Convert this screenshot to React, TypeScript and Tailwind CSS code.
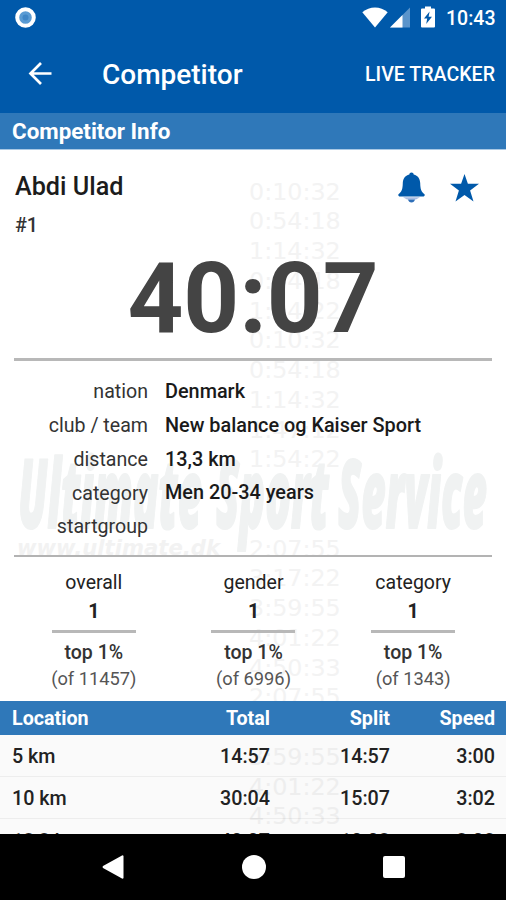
import React from 'react';

interface Detail {
  label: string;
  value: string;
}

interface Ranking {
  label: string;
  rank: number;
  top: string;
  total: number;
}

interface Split {
  location: string;
  total: string;
  split: string;
  speed: string;
}

const details: Detail[] = [
  { label: 'nation', value: 'Denmark' },
  { label: 'club / team', value: 'New balance og Kaiser Sport' },
  { label: 'distance', value: '13,3 km' },
  { label: 'category', value: 'Men 20-34 years' },
  { label: 'startgroup', value: '' }
];

const rankings: Ranking[] = [
  { label: 'overall', rank: 1, top: 'top 1%', total: 11457 },
  { label: 'gender', rank: 1, top: 'top 1%', total: 6996 },
  { label: 'category', rank: 1, top: 'top 1%', total: 1343 }
];

const splits: Split[] = [
  { location: '5 km', total: '14:57', split: '14:57', speed: '3:00' },
  { location: '10 km', total: '30:04', split: '15:07', speed: '3:02' },
  { location: '13,3 km', total: '40:07', split: '10:03', speed: '3:02' }
];

const watermarkTimes = [
  '0:10:32', '0:54:18', '1:14:32', '0:54:18', '1:54:22', '0:10:32', '0:54:18',
  '1:14:32', '1:47:12', '1:54:22', '', '', '2:07:55', '3:17:22',
  '3:59:55', '4:01:22', '4:50:33', '2:07:55', '', '3:59:55', '4:01:22', '4:50:33'
];

const StatusBar: React.FC = () => (
  <div className="flex h-[34px] items-center pl-[15px] pr-[11px] text-white">
    <svg className="h-[21px] w-[21px]" viewBox="0 0 21 21">
      <circle cx="10.5" cy="10.5" r="8.3" fill="#5a9bd3" stroke="#fff" strokeWidth="4" />
      <circle cx="10.5" cy="10.5" r="3" fill="#3f86c6" />
    </svg>
    <svg className="ml-auto h-[21px] w-[26px]" viewBox="0 0 26 21">
      <path d="M0.3 5.2C7.5-1.2 18.5-1.2 25.7 5.2L13 20.5Z" fill="#fff" />
    </svg>
    <svg className="ml-[2px] h-[21px] w-[20px]" viewBox="0 0 20 21">
      <path d="M20 0.5V20.5H0Z" fill="#5a94cb" />
      <path d="M12.5 8V20.5H0Z" fill="#fff" />
    </svg>
    <svg className="ml-[11px] h-[22px] w-[14px]" viewBox="0 0 14 22">
      <path d="M4 0.5h6v2h3q1 0 1 1v17q0 1-1 1H1q-1 0-1-1v-17q0-1 1-1h3Z" fill="#fff" />
      <path d="M8.6 5.5L3 12.6h3.2L5.2 18 11 10.8H7.6Z" fill="#0059aa" />
    </svg>
    <span className="ml-[11px] mt-[3px] w-[49px] text-[19.5px] font-medium">10:43</span>
  </div>
);

const Toolbar: React.FC = () => (
  <div className="flex h-[79px] items-center pl-[28px] pr-[11px] text-white">
    <button aria-label="Back">
      <svg className="h-[23px] w-[24px]" viewBox="0 0 24 23" fill="none" stroke="#fff" strokeWidth="2.7">
        <path d="M23.5 11.5H2.5M13 1L2.5 11.5 13 22" />
      </svg>
    </button>
    <h1 className="ml-[50px] mt-[2px] text-[28px] font-medium">Competitor</h1>
    <button className="ml-auto mt-[2px] text-[19.6px] font-medium">LIVE TRACKER</button>
  </div>
);

const Watermark: React.FC = () => (
  <div className="pointer-events-none absolute inset-0 overflow-hidden" aria-hidden="true">
    <div className="ml-[249px] pt-[27.5px] font-['DejaVu_Sans'] text-[23.8px] leading-[29.75px] text-[#f3f3f3]">
      {watermarkTimes.map((time, i) => (
        <div key={i} className="h-[29.75px]">{time}</div>
      ))}
    </div>
    <svg className="absolute left-0 top-[290px] h-[120px] w-full" viewBox="0 0 506 120">
      <g fontFamily="Open Sans" fontWeight="800" fontStyle="italic" fontSize="95" fill="#f0f2f2" stroke="#f0f2f2" strokeWidth="2" strokeLinejoin="round">
        <text x="18" y="88" textLength="184" lengthAdjust="spacingAndGlyphs">Ultimate</text>
        <text x="216" y="88" textLength="113" lengthAdjust="spacingAndGlyphs">Sport</text>
        <text x="338" y="88" textLength="149" lengthAdjust="spacingAndGlyphs">Service</text>
      </g>
      <text x="17" y="115" fontFamily="DejaVu Sans" fontWeight="700" fontStyle="italic" fontSize="21" fill="#f2f2f2" textLength="203" lengthAdjust="spacingAndGlyphs">
        www.ultimate.dk
      </text>
    </svg>
  </div>
);

const CompetitorSummary: React.FC = () => (
  <section className="relative mx-[14px] h-[211px] border-b-[3px] border-[#b8b8b8] pt-[20px]">
    <div className="flex items-start">
      <h2 className="ml-px text-[25.2px] font-medium leading-[34px] text-[#1c1c1c]">Abdi Ulad</h2>
      <button className="ml-auto mt-[2px]" aria-label="Notifications">
        <svg className="h-[31px] w-[27px]" viewBox="0 0 27 31">
          <path d="M11.3 2.6a2.2 2.2 0 0 1 4.4 0C20 3.7 22 7 22.2 11c.2 6.5 1 8.5 4.3 11.2q.8 1.5-.8 2.3H1.3q-1.6-.8-.8-2.3C3.8 19.5 4.6 17.5 4.8 11 5 7 7 3.7 11.3 2.6Z" fill="#0059aa" />
          <path d="M5 25.3h17l-4 2.2H9Z" fill="#a9bde3" />
          <path d="M10 27.5h7q-.8 3-3.5 3T10 27.5Z" fill="#2f6fb8" />
        </svg>
      </button>
      <button className="ml-[25px] mr-[13px] mt-[4px]" aria-label="Favorite">
        <svg className="h-[28px] w-[29px]" viewBox="0 0 29 28">
          <path d="M14.5 0L17.9 9.8H29L20.1 16.5 23.5 27.5 14.5 21 5.5 27.5 8.9 16.5 0 9.8H11.1Z" fill="#0059aa" />
        </svg>
      </button>
    </div>
    <p className="ml-px mt-[10px] text-[19.7px] font-medium leading-[24px] text-[#333]">#1</p>
    <p className="mt-[13px] text-center text-[97.5px] font-bold leading-[96px] text-[#444]">40:07</p>
  </section>
);

const DetailList: React.FC = () => (
  <section className="relative mx-[14px] h-[196px] border-b-2 border-[#b3b3b3] pt-[14px]">
    {details.map(({ label, value }) => (
      <div key={label} className="flex h-[33.8px] items-center text-[19.6px]">
        <span className="w-[134px] text-right text-[#333]">{label}</span>
        <span className="ml-[17px] text-[19.85px] font-medium text-[#1a1a1a]">{value}</span>
      </div>
    ))}
  </section>
);

const Rankings: React.FC = () => (
  <section className="relative ml-[14px] mr-[13px] grid h-[144px] grid-cols-3 pt-[12px] text-center text-[19.5px] leading-[27px] text-[#222]">
    {rankings.map(({ label, rank, top, total }) => (
      <div key={label} className="flex flex-col items-center">
        <span>{label}</span>
        <span className="mt-[2px] font-bold">{rank}</span>
        <span className="mt-[5px] h-[3px] w-[84px] bg-[#b8b8b8]" />
        <span className="mt-[6px] font-medium text-[#333]">{top}</span>
        <span className="-mt-px text-[18.3px] text-[#555]">(of {total})</span>
      </div>
    ))}
  </section>
);

const SplitTable: React.FC = () => (
  <section className="relative">
    <div className="grid h-[34px] grid-cols-[158px_100px_120px_105px] items-center bg-[#2f78b9] pl-[12px] pr-[11px] pt-px text-right text-[19.7px] font-bold text-white">
      <span className="text-left">Location</span>
      <span>Total</span>
      <span>Split</span>
      <span>Speed</span>
    </div>
    {splits.map(({ location, total, split, speed }) => (
      <div key={location} className="grid h-[42px] grid-cols-[158px_100px_120px_105px] items-center border-b border-black/5 bg-black/2 pl-[12px] pr-[11px] pt-[2px] text-right text-[19.7px] font-medium text-[#222] last:h-[44px]">
        <span className="text-left">{location}</span>
        <span>{total}</span>
        <span>{split}</span>
        <span>{speed}</span>
      </div>
    ))}
  </section>
);

const NavigationBar: React.FC = () => (
  <nav className="flex h-[66px] shrink-0 items-center bg-black pl-[102px]">
    <svg className="h-[24px] w-[22px]" viewBox="0 0 22 24">
      <path d="M21.5 1V23Q21 24 20 23.5L1 13Q0 12 1 11L20 .5Q21 0 21.5 1Z" fill="#fff" />
    </svg>
    <span className="ml-[118px] h-[24px] w-[24px] rounded-full bg-white" />
    <span className="ml-[117px] h-[22px] w-[22px] rounded-[2px] bg-white" />
  </nav>
);

const App: React.FC = () => {
  return (
    <div className="flex h-[900px] w-[506px] flex-col overflow-hidden bg-white font-[Roboto,sans-serif]">
      <header className="shrink-0 bg-[#0059aa]">
        <StatusBar />
        <Toolbar />
      </header>
      <div className="flex h-[37px] shrink-0 items-center border-b border-[#a9c8e4] bg-[#2f78b9] pl-[12px] pt-px text-[22.4px] font-bold text-white">
        Competitor Info
      </div>

      <main className="relative min-h-0 flex-1 overflow-hidden">
        <Watermark />
        <CompetitorSummary />
        <DetailList />
        <Rankings />
        <SplitTable />
      </main>

      <NavigationBar />
    </div>
  );
};

export default App;
